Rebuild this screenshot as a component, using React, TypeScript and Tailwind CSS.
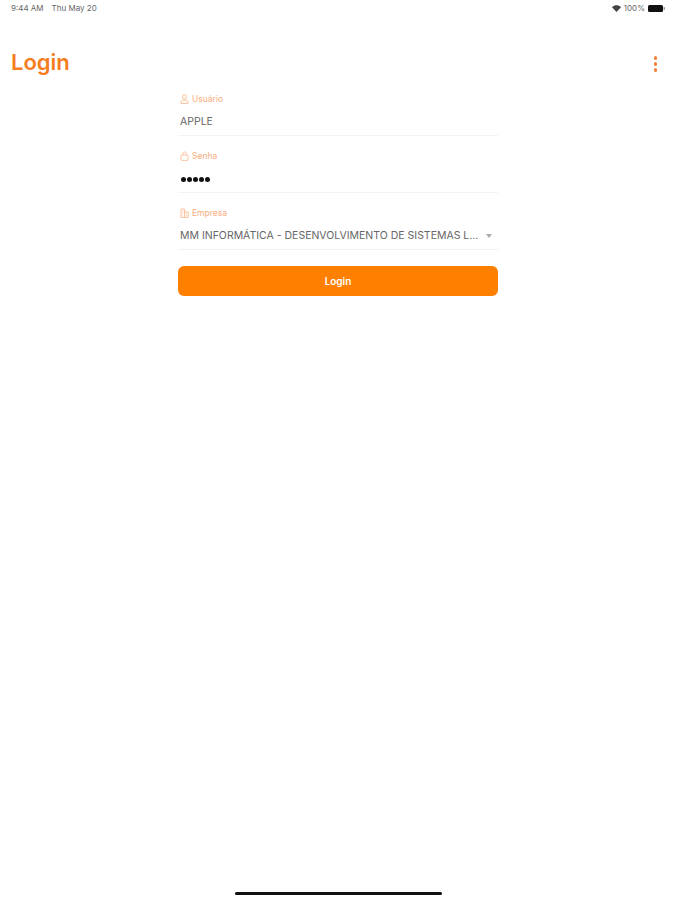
import React from "react";

const font = { fontFamily: '"Inter", "Liberation Sans", sans-serif' };

function UserIcon() {
  return (
    <svg width="9" height="10" viewBox="0 0 9 10" fill="none" stroke="#f9b183" strokeWidth="0.8">
      <circle cx="4.5" cy="2.8" r="2" />
      <path d="M1 9.4V8.2C1 6.9 2 6.2 3 6.2H6C7 6.2 8 6.9 8 8.2V9.4Z" />
    </svg>
  );
}

function LockIcon() {
  return (
    <svg width="9" height="10" viewBox="0 0 9 10" fill="none" stroke="#f9b183" strokeWidth="0.8">
      <rect x="1" y="4" width="7" height="5.4" rx="1" />
      <path d="M2.8 4V2.6C2.8 1.6 3.5 1 4.5 1S6.2 1.6 6.2 2.6V4" />
    </svg>
  );
}

function BuildingIcon() {
  return (
    <svg width="9" height="10" viewBox="0 0 9 10" fill="none" stroke="#f9b183" strokeWidth="0.8">
      <path d="M1 9.4V1H4.6V9.4M4.6 4H8.2V9.4H1" />
      <path d="M2.3 3H3.4M2.3 5H3.4M2.3 7H3.4M5.8 6H7M5.8 7.6H7" strokeWidth="0.6" />
    </svg>
  );
}

function Field({ icon, label, children }: { icon: React.ReactNode; label: string; children: React.ReactNode }) {
  return (
    <div className="h-[44px] mb-[13px] border-b border-[#f3f3f3] box-border">
      <div className="h-[14px] pl-[2px] flex items-center gap-[3px] text-[8.5px] text-[#f9ad7d]">
        {icon}
        <span>{label}</span>
      </div>
      {children}
    </div>
  );
}

export default function App() {
  return (
    <div style={font} className="w-[675px] h-[900px] bg-white flex flex-col overflow-hidden relative">
      <div className="h-[16px] pl-[11px] pr-[10px] flex items-center justify-between text-[8px] text-[#666]">
        <div className="flex gap-[8px]">
          <span>9:44 AM</span>
          <span>Thu May 20</span>
        </div>
        <div className="flex items-center gap-[3px]">
          <svg width="9" height="7" viewBox="0 0 9 7" fill="#444">
            <path d="M0 2.2C2.6-.3 6.4-.3 9 2.2L4.5 7Z" />
          </svg>
          <span>100%</span>
          <svg width="17" height="7" viewBox="0 0 17 7">
            <rect x="0" y="0" width="15" height="7" rx="1.5" fill="#111" />
            <rect x="15.5" y="2" width="1.5" height="3" rx="0.7" fill="#999" />
          </svg>
        </div>
      </div>

      <div className="h-[62px] pl-[11px] pr-[18px] flex items-start justify-between">
        <h1 className="mt-[32px] text-[22px] leading-[28px] font-semibold text-[#f57c1f]">Login</h1>
        <div className="flex flex-col gap-[2.5px] pt-[40px]">
          <span className="w-[3.5px] h-[3.5px] rounded-full bg-[#f0803c]" />
          <span className="w-[3.5px] h-[3.5px] rounded-full bg-[#f0803c]" />
          <span className="w-[3.5px] h-[3.5px] rounded-full bg-[#f0803c]" />
        </div>
      </div>

      <div className="w-[320px] ml-[178px] mt-[14px]">
        <Field icon={<UserIcon />} label="Usuário">
          <div className="h-[28px] mt-[2px] pl-[2px] flex items-center text-[10.5px] text-[#666]">APPLE</div>
        </Field>
        <Field icon={<LockIcon />} label="Senha">
          <div className="h-[28px] mt-[2px] pl-[3px] flex items-center gap-[1px]">
            {[0, 1, 2, 3, 4].map((i) => (
              <span key={i} className="w-[5px] h-[5px] rounded-full bg-[#111]" />
            ))}
          </div>
        </Field>
        <Field icon={<BuildingIcon />} label="Empresa">
          <div className="h-[28px] mt-[2px] pl-[2px] pr-[6px] flex items-center justify-between text-[10.5px] text-[#666]">
            <span>MM INFORMÁTICA - DESENVOLVIMENTO DE SISTEMAS L...</span>
            <svg width="6" height="4" viewBox="0 0 6 4" fill="#aaa">
              <path d="M0 0H6L3 4Z" />
            </svg>
          </div>
        </Field>
        <button className="w-full h-[30px] mt-[16px] rounded-[6px] bg-[#ff8000] text-white text-[10px] font-semibold flex items-center justify-center">
          Login
        </button>
      </div>

      <div className="absolute bottom-[5px] left-[235px] w-[207px] h-[3px] rounded-full bg-[#111]" />
    </div>
  );
}
